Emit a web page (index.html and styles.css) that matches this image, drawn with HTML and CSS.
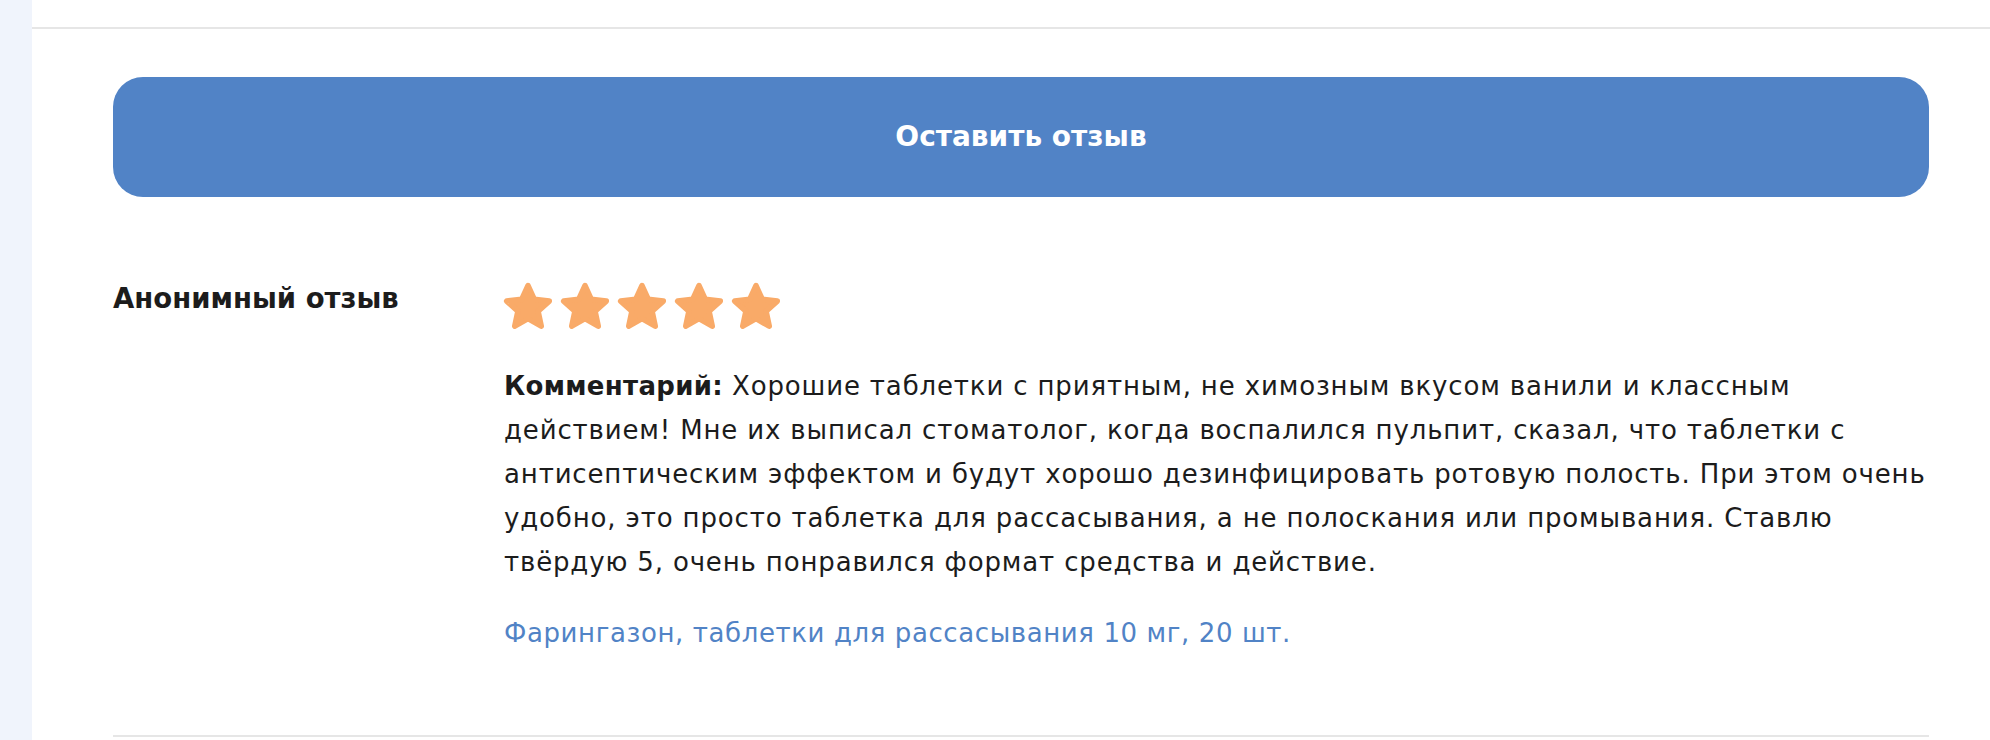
FILE: index.html
```html
<!DOCTYPE html>
<html lang="ru">
<head>
<meta charset="utf-8">
<title>Отзывы</title>
<link rel="stylesheet" href="styles.css">
</head>
<body>
<div class="page">
  <aside class="sidebar"></aside>
  <main class="main">
    <div class="top-gap"></div>
    <div class="content">
      <button class="review-btn" type="button">Оставить отзыв</button>
      <article class="review">
        <div class="author">Анонимный отзыв</div>
        <div class="review-body">
          <div class="stars">
            <svg class="star" viewBox="0 0 50 50"><polygon points="25,5 30.6,17.3 44,18.8 34,27.9 36.8,41.2 25,34.5 13.2,41.2 16,27.9 6,18.8 19.4,17.3"/></svg>
            <svg class="star" viewBox="0 0 50 50"><polygon points="25,5 30.6,17.3 44,18.8 34,27.9 36.8,41.2 25,34.5 13.2,41.2 16,27.9 6,18.8 19.4,17.3"/></svg>
            <svg class="star" viewBox="0 0 50 50"><polygon points="25,5 30.6,17.3 44,18.8 34,27.9 36.8,41.2 25,34.5 13.2,41.2 16,27.9 6,18.8 19.4,17.3"/></svg>
            <svg class="star" viewBox="0 0 50 50"><polygon points="25,5 30.6,17.3 44,18.8 34,27.9 36.8,41.2 25,34.5 13.2,41.2 16,27.9 6,18.8 19.4,17.3"/></svg>
            <svg class="star" viewBox="0 0 50 50"><polygon points="25,5 30.6,17.3 44,18.8 34,27.9 36.8,41.2 25,34.5 13.2,41.2 16,27.9 6,18.8 19.4,17.3"/></svg>
          </div>
          <p class="comment"><b>Комментарий:</b> Хорошие таблетки с приятным, не химозным вкусом ванили и классным<br>действием! Мне их выписал стоматолог, когда воспалился пульпит, сказал, что таблетки с<br>антисептическим эффектом и будут хорошо дезинфицировать ротовую полость. При этом очень<br>удобно, это просто таблетка для рассасывания, а не полоскания или промывания. Ставлю<br>твёрдую 5, очень понравился формат средства и действие.</p>
          <a class="product" href="#">Фарингазон, таблетки для рассасывания 10 мг, 20 шт.</a>
        </div>
      </article>
      <div class="divider"></div>
    </div>
  </main>
</div>
</body>
</html>
```

FILE: styles.css
```css
* { box-sizing: border-box; }
html, body { margin: 0; padding: 0; background: #ffffff; }
body {
  font-family: "DejaVu Sans", "Noto Sans", sans-serif;
  color: #1c1c1c;
  width: 1990px;
  height: 740px;
  overflow: hidden;
}
.page {
  display: flex;
  height: 740px;
}
.sidebar {
  width: 32px;
  flex: none;
  background: #f0f4fc;
}
.main {
  flex: 1;
  display: flex;
  flex-direction: column;
}
.top-gap {
  height: 29px;
  border-bottom: 2px solid #e6e6e6;
  flex: none;
}
.content {
  padding: 48px 61px 0 81px;
}
.review-btn {
  display: flex;
  align-items: center;
  justify-content: center;
  width: 100%;
  height: 120px;
  border: none;
  border-radius: 30px;
  background: #5183c6;
  color: #ffffff;
  font-family: "DejaVu Sans", "Noto Sans", sans-serif;
  font-weight: 700;
  font-size: 28px;
  padding: 0 0 2px;
}
.review {
  display: flex;
  padding-top: 83px;
}
.author {
  width: 391px;
  flex: none;
  font-weight: 700;
  font-size: 27.5px;
  line-height: 30px;
  padding-top: 3px;
}
.review-body {
  flex: 1;
  display: flex;
  flex-direction: column;
}
.stars {
  display: flex;
  gap: 1px;
  height: 52px;
  margin-left: -4px;
}
.star {
  width: 56px;
  height: 56px;
  fill: #f9aa68;
  stroke: #f9aa68;
  stroke-width: 5;
  stroke-linejoin: round;
}
.comment {
  margin: 32px 0 0;
  font-size: 26px;
  letter-spacing: 0.85px;
  line-height: 44px;
  white-space: nowrap;
}
.comment b { font-weight: 700; letter-spacing: 0.3px; }
.product {
  margin-top: 27px;
  color: #5183c6;
  font-size: 26px;
  letter-spacing: 0.6px;
  line-height: 44px;
  text-decoration: none;
  align-self: flex-start;
}
.divider {
  margin-top: 80px;
  border-top: 2px solid #e6e6e6;
}
```
